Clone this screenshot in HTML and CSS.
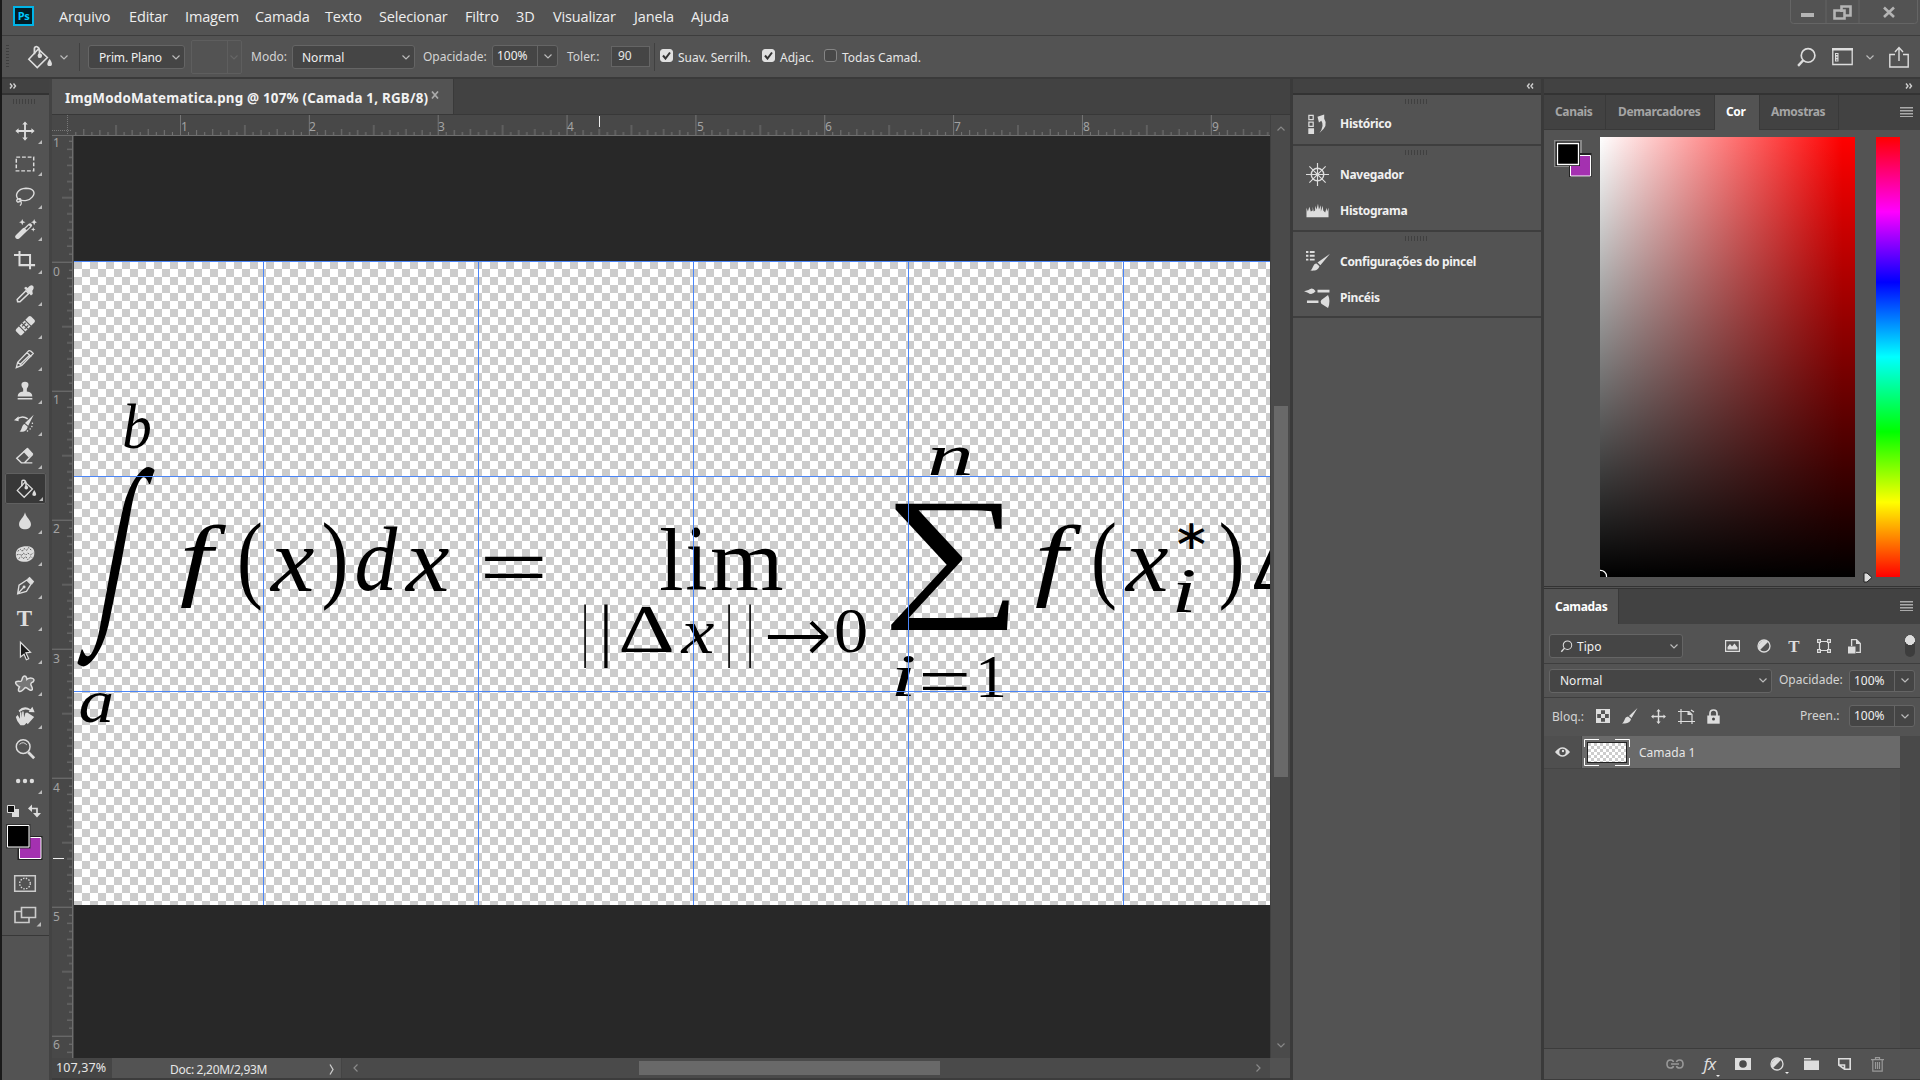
FILE: index.html
```html
<!DOCTYPE html>
<html lang="pt-BR">
<head>
<meta charset="utf-8">
<title>ImgModoMatematica.png</title>
<link rel="stylesheet" href="styles.css">
</head>
<body>
<svg width="0" height="0" class="defs" aria-hidden="true">
  <defs>
    <symbol id="chev" viewBox="0 0 8 5"><path d="M.5 .5 4 4 7.5 .5" fill="none" stroke="currentColor" stroke-width="1.2"/></symbol>
    <symbol id="bucket" viewBox="0 0 24 24"><path d="M11 4.5 2.5 13.5 10 21 19 12Z" fill="none" stroke="#ddd" stroke-width="1.4"/><path d="M12 12V6.500C12 1.500 7.500 1.500 7.500 4V9" fill="none" stroke="#ddd" stroke-width="1.600"/><circle cx="12.300" cy="10.500" r="2"/><path d="M21 13c3 4.500 2.500 6.500 0 6.500s-3-2 0-6.500"/></symbol>
    <symbol id="move" viewBox="0 0 24 24"><path d="M11 11V5H9l3-3.500L15 5h-2v6h6V9l3.500 3L19 15v-2h-6v6h2l-3 3.500L9 19h2v-6H5v2l-3.500-3L5 9v2Z"/></symbol>
    <symbol id="brush" viewBox="0 0 16 16"><path d="M15.500 0 9.500 10 7 8Z M6 8.500 9 11C8 15 4 16 0 15.500 3 14 2 9 6 8.500Z"/></symbol>
    <symbol id="lens" viewBox="0 0 20 20"><circle cx="11.500" cy="8" r="6.500" fill="none" stroke="#ddd" stroke-width="1.600"/><path d="M7 12.500 2 18" stroke="#ddd" stroke-width="2.200"/></symbol>
    <symbol id="half" viewBox="0 0 14 14"><circle cx="7" cy="7" r="6" fill="none" stroke="#ddd" stroke-width="1.300"/><path d="M11.200 2.800A6 6 0 0 1 2.800 11.200Z" transform="rotate(180 7 7)"/></symbol>
    <pattern id="ticksX" x="180" y="115" width="128.850" height="20" patternUnits="userSpaceOnUse">
      <path class="tick" d="M.5 0V20M64.900 10V20M32.700 14V20M97.100 14V20M16.600 15V20M48.800 15V20M81 15V20M113.200 15V20M8.500 17V20M24.700 17V20M40.800 17V20M56.900 17V20M73 17V20M89.100 17V20M105.200 17V20M121.300 17V20"/>
    </pattern>
    <pattern id="ticksY" x="52" y="261.700" width="20" height="129" patternUnits="userSpaceOnUse">
      <path class="tick" d="M0 .5H20M10 65H20M15 32.700H20M15 97.200H20M15 16.600H20M15 48.900H20M15 81.100H20M15 113.400H20M17 8.500H20M17 24.700H20M17 40.800H20M17 56.900H20M17 73H20M17 89.200H20M17 105.300H20M17 121.400H20"/>
    </pattern>
  </defs>
</svg>

<div class="app">
  <header class="menubar">
    <div class="logo">Ps</div>
    <nav class="menus"><span>Arquivo</span><span>Editar</span><span>Imagem</span><span>Camada</span><span>Texto</span><span>Selecionar</span><span>Filtro</span><span>3D</span><span>Visualizar</span><span>Janela</span><span>Ajuda</span></nav>
    <div class="winbtns">
      <svg width="128" height="24" viewBox="0 0 128 24"><path d="M.5 0V20.500Q.5 23.500 3.500 23.500H124.500Q127.500 23.500 127.500 20.500V0M36 0V23M69 0V23" fill="none" stroke="#656565"/><path d="M11 13h13v4H11Z" fill="#b4b4b4"/><path d="M51.500 12V6.500H60.500V15.500H55M44.500 10.500H54.500V18.500H44.500Z" fill="none" stroke="#b4b4b4" stroke-width="2.600"/><path d="M94 7.500 104 17M104 7.500 94 17" stroke="#b4b4b4" stroke-width="2.600"/></svg>
    </div>
  </header>

  <section class="options">
    <div class="grip-v"></div>
    <svg class="ic bucket" width="27" height="27"><use href="#bucket"/></svg>
    <svg class="chev" width="8" height="5"><use href="#chev"/></svg>
    <i class="sep sep-a"></i>
    <div class="select s-plane"><span>Prim. Plano</span><svg width="8" height="5"><use href="#chev"/></svg></div>
    <div class="pattern-box"><svg width="8" height="5"><use href="#chev"/></svg></div>
    <label class="l-mode">Modo:</label>
    <div class="select s-mode"><span>Normal</span><svg width="8" height="5"><use href="#chev"/></svg></div>
    <label class="l-opac">Opacidade:</label>
    <div class="combo"><span>100%</span><b><svg width="8" height="5"><use href="#chev"/></svg></b></div>
    <label class="l-tol">Toler.:</label>
    <div class="field">90</div>
    <i class="sep sep-b"></i>
    <div class="check on c1"><svg width="9" height="9" viewBox="0 0 9 9"><path d="M1 4.500 3.500 7.500 8 1.500" fill="none" stroke="#333" stroke-width="2"/></svg></div><span class="ck t1">Suav. Serrilh.</span>
    <div class="check on"><svg width="9" height="9" viewBox="0 0 9 9"><path d="M1 4.500 3.500 7.500 8 1.500" fill="none" stroke="#333" stroke-width="2"/></svg></div><span class="ck t2">Adjac.</span>
    <div class="check"></div><span class="ck">Todas Camad.</span>
    <div class="right-tools">
      <svg class="ic" width="21" height="21"><use href="#lens"/></svg>
      <svg class="ic" width="21" height="18" viewBox="0 0 21 18"><path d="M.8.800H20.200V16.500H.8Z" fill="none" stroke="#ddd" stroke-width="1.300"/><path d="M0 0H21V2.500H0ZM3 5h3.500v8.500H3Z"/><path d="M4 6.500h1.500M4 9.200h1.500M4 12h1.500" stroke="#535353"/></svg>
      <svg class="chev" width="8" height="5"><use href="#chev"/></svg>
      <svg class="ic" width="20" height="22" viewBox="0 0 20 22"><path d="M6 8.500H.8V21H19.200V8.500H14M10 15V2M6 6 10 1.500 14 6" fill="none" stroke="#ddd" stroke-width="1.400"/></svg>
    </div>
  </section>

  <main class="work">
    <aside class="toolbar">
      <div class="dock-head"><svg width="8" height="6" viewBox="0 0 8 6"><path d="M1 .5 3 3 1 5.500M4.500 .5 6.500 3 4.500 5.500" fill="none" stroke="#d0d0d0" stroke-width="1.400"/></svg></div>
      <div class="grip-row"><i class="grip"></i></div>
      <div class="tools">
        <div class="tool"><svg class="ic"><use href="#move"/></svg></div>
        <div class="tool"><svg class="ic" viewBox="0 0 24 24"><path d="M2.500 4.500H21.500V19.500H2.500Z" fill="none" stroke="#ddd" stroke-width="1.600" stroke-dasharray="4.200 2"/></svg></div>
        <div class="tool"><svg class="ic" viewBox="0 0 24 24"><path d="M5 16C0 11 4 4 13 3.500 21 3.500 24 8 20 13 17 17 11 18 5.500 16M7 15C3 14 2 18 4 18.500 7 19 8 16 7 15M7 17C9 20 8 21 6.500 22.500" fill="none" stroke="#ddd" stroke-width="1.500"/></svg></div>
        <div class="tool"><svg class="ic" viewBox="0 0 24 24"><path d="M3.500 20.500 11 13M4.500 20.500 17.500 8" stroke="#ddd" stroke-width="4.500" stroke-linecap="round"/><path d="M13 12.500 17 8.500" stroke="#535353" stroke-width="2"/><path d="M9 1 10 3.500 12.500 4.500 10 5.500 9 8 8 5.500 5.500 4.500 8 3.500ZM22 1 23 3.500 25 4.500 23 5.500 22 8 21 5.500 18.500 4.500 21 3.500ZM21 10l.7 1.800 1.800.7-1.800.700L21 15l-.7-1.800-1.800-.700 1.800-.700Z"/></svg></div>
        <div class="tool"><svg class="ic" viewBox="0 0 24 24"><path d="M0 5.500H17.500V21M6 1V16.500H23" fill="none" stroke="#ddd" stroke-width="2.200"/></svg></div>
        <div class="tool"><svg class="ic" viewBox="0 0 24 24"><path d="M4 20.500 3.500 18 13 8.500 16 11.500 6.500 20.500Z" fill="none" stroke="#ddd" stroke-width="1.700"/><path d="M11 5.500 13 4 15 5.500C19-1 24 4 20 8.500L20.500 12 18.500 13.500Z"/></svg></div>
        <div class="tool"><svg class="ic" viewBox="0 0 24 24"><g transform="rotate(-45 12 12)"><rect x="1" y="7.500" width="23" height="9" rx="2"/><path d="M7.500 7V17M16.500 7V17M9.500 10H15M9.500 14H15M12 7.500V16.500" stroke="#535353" stroke-width="1.200"/></g></svg></div>
        <div class="tool"><svg class="ic" viewBox="0 0 24 24"><path d="M2.500 21.500 4 15.500 16 3 Q18 2 21 6L8.500 19ZM14 5 19 9.500M4 15.500 8.500 19M17 8 6.500 18" fill="none" stroke="#ddd" stroke-width="1.400"/></svg></div>
        <div class="tool"><svg class="ic" viewBox="0 0 24 24"><path d="M12 2C7 2 7.500 6.500 10 9.500V12.500Q4 13 4 18H20Q20 13 14 12.500V9.500C16.500 6.500 17 2 12 2M4 19.500H20V21.300H4Z"/></svg></div>
        <div class="tool"><svg class="ic" viewBox="0 0 24 24"><path d="M21.500 2 15.500 14 12 11ZM11.500 12 15 15C14 20 10 21.500 6 20 9 19 8 13 11.500 12ZM0 8 5 3.500V9Z"/><path d="M3 7Q9 2 15 6.500" fill="none" stroke="#ddd" stroke-width="1.800"/><path d="M20 10.500Q21 16 14 20" fill="none" stroke="#ddd" stroke-width="1.400" stroke-dasharray="1.500 2"/></svg></div>
        <div class="tool"><svg class="ic" viewBox="0 0 24 24"><path d="M10 7 15 3 21 9.500 16 13.500Z"/><path d="M15 3.500 3 14.500 8 19.500H11.500L20.500 10M8 19.500H20" fill="none" stroke="#ddd" stroke-width="1.600"/></svg></div>
        <div class="tool active"><svg class="ic"><use href="#bucket"/></svg></div>
        <div class="tool"><svg class="ic" viewBox="0 0 24 24"><path d="M12 2.500C13 8 18.500 11 18.500 15.500 18.500 23 5.500 23 5.500 15.500 5.500 11 11 8 12 2.500"/></svg></div>
        <div class="tool"><svg class="ic" viewBox="0 0 24 24"><path d="M2 12C2 5 9 3 15 3.500S23 8 22 13 16 21 10 20.500 2 17 2 12"/><path d="M4 9l3-2 2 2 2-3 3 2 2-3 3 3M3 13l3-1 2 2 2-3 3 2 2-2 3 2 3-2M5 17l3-2 2 2 3-2 2 3 3-3 2 1" fill="none" stroke="#535353" stroke-width="1" stroke-dasharray="2 1.200"/></svg></div>
        <div class="tool"><svg class="ic" viewBox="0 0 24 24"><path d="M4 20.500 5.500 11 14 5.500 18.500 10 13.500 18Z M4.500 20 10.500 13.500" fill="none" stroke="#ddd" stroke-width="1.500"/><circle cx="11" cy="13" r="1.600"/><path d="M14 4.500 17 2 22 7 19.500 10.500Z"/></svg></div>
        <div class="tool"><span class="type">T</span></div>
        <div class="tool"><svg class="ic" viewBox="0 0 24 24"><path d="M7 2.500 18 13.500 13 14 16 20.500 13.500 21.500 11 15.500 7 18.500Z" fill="#1b1b1b" stroke="#ddd" stroke-width="1.300"/></svg></div>
        <div class="tool"><svg class="ic" viewBox="0 0 24 24"><path d="M10 4C12 2 14 4 14 7 18 4 24 6 21 9.500 15 12 21 15 20 18 18 21 14 15 12 16 6 23 3 20 6 15 0 11 1 9 5 9 10 10 8 6 10 4Z" fill="#777" stroke="#ddd" stroke-width="1.600"/></svg></div>
        <div class="tool"><svg class="ic" viewBox="0 0 24 24"><path d="M5 6Q11 0 18 4.500L20 2 22.500 8 16 7.500 17 6Q11 3 6 8ZM14 8 22 13 15 21 10 15ZM4 11 6.500 15V8L8 8 8.500 14 9 7H10.500L11 14 12.500 8.500 14 9 14 15 16.500 14Q13 22 11 22H7Q3 18 2 13Z"/></svg></div>
        <div class="tool plain"><svg class="ic" viewBox="0 0 24 24"><circle cx="10" cy="9.500" r="7.500" fill="none" stroke="#ddd" stroke-width="1.600"/><path d="M15.500 15.500 22 22" stroke="#ddd" stroke-width="3"/><path d="M6 7Q10 3 14 7.500" fill="none" stroke="#ddd"/></svg></div>
        <div class="tool"><svg class="ic" viewBox="0 0 24 24"><circle cx="4.500" cy="12" r="2.400"/><circle cx="12" cy="12" r="2.400"/><circle cx="19.500" cy="12" r="2.400"/></svg></div>
      </div>
      <svg class="tail" width="47" height="144" viewBox="2 796 47 144">
        <path d="M12 809h7v8h-7Z" fill="#ddd"/><path d="M7.500 805.500h7v7h-7Z" fill="#111" stroke="#ddd"/>
        <path d="M31 808.500H37V814" fill="none" stroke="#ddd" stroke-width="1.700"/><path d="M32 804.500V812L28 808.500ZM33 813H41L37 817.500Z" fill="#ddd"/>
        <path d="M19 837.500H41V858.500H19Z" fill="#a431b0" stroke="#222" stroke-width="3"/><path d="M19.500 837.500H41V858.500H19.500Z" fill="#a431b0" stroke="#fff"/>
        <path d="M7.500 825.500H29V847H7.500Z" fill="#000" stroke="#333" stroke-width="3"/><path d="M7.500 825.500H29V847H7.500Z" fill="#000" stroke="#fff"/>
        <path d="M14.700 875.700H35.300V891.300H14.700Z" fill="none" stroke="#ccc" stroke-width="1.500"/><circle cx="25" cy="883.500" r="5.300" fill="none" stroke="#ddd" stroke-width="1.300" stroke-dasharray="1.400 1.400"/>
        <path d="M21 911.500H15V922.500H29V918M21.500 907.500H35.500V917.500H21.500Z" fill="none" stroke="#ccc" stroke-width="1.600"/><path d="M41 922V926.500H36.500Z" fill="#bbb"/>
        <path d="M2 935.500H49" stroke="#383838"/>
      </svg>
    </aside>

    <section class="document">
      <div class="tabs"><div class="tab"><span>ImgModoMatematica.png @ 107% (Camada 1, RGB/8)</span><svg width="8" height="8" viewBox="0 0 8 8"><path d="M1 .5 7 7.500M7 .5 1 7.500" stroke="#aaa" stroke-width="1.700"/></svg></div></div>
      <div class="view">
        <svg class="ruler-x" width="1218" height="21" viewBox="52 115 1218 21">
          <rect x="74" y="115" width="1196" height="20" fill="url(#ticksX)"/>
          <path d="M52 135.500H1270" stroke="#6e6e6e"/><path d="M52 130.500H72M67.500 115V135" stroke="#777" stroke-dasharray="1 1"/>
          <g class="num"><text x="181" y="131">1</text><text x="309" y="131">2</text><text x="438" y="131">3</text><text x="567" y="131">4</text><text x="697" y="131">5</text><text x="825" y="131">6</text><text x="954" y="131">7</text><text x="1083" y="131">8</text><text x="1212" y="131">9</text></g>
          <path d="M599.500 116V127" stroke="#eee"/>
        </svg>
        <svg class="ruler-y" width="22" height="922" viewBox="52 136 22 922">
          <rect x="52" y="136" width="20" height="922" fill="url(#ticksY)"/>
          <path d="M72.500 136V1058" stroke="#6e6e6e"/>
          <g class="num"><text x="53" y="147">1</text><text x="53" y="276">0</text><text x="53" y="404">1</text><text x="53" y="533">2</text><text x="53" y="663">3</text><text x="53" y="792">4</text><text x="53" y="921">5</text><text x="53" y="1049">6</text></g>
          <path d="M53 858.500H64" stroke="#eee"/>
        </svg>
        <div class="canvas">
          <div class="image">
            <svg id="formula" width="1196" height="643" viewBox="74 262 1196 643"></svg>
            <svg class="guides" width="1196" height="645" viewBox="74 261 1196 645"><path d="M74 261.500H1270M74 476.500H1270M74 691.500H1270M263.500 261V905M478.500 261V905M693.500 261V905M908.500 261V905M1123.500 261V905" stroke="#4b86f8" fill="none"/></svg>
          </div>
        </div>
        <div class="vscroll"><svg width="8" height="5"><use href="#chev"/></svg><i></i><svg width="8" height="5"><use href="#chev"/></svg></div>
      </div>
      <div class="status"><div class="zoom">107,37%</div><div class="docinfo"><span>Doc: 2,20M/2,93M</span><svg width="5" height="11" viewBox="0 0 5 11"><path d="M1 .5 4 5.500 1 10.500" fill="none" stroke="#ccc" stroke-width="1.300"/></svg></div>
        <div class="hscroll"><svg width="5" height="8"><path d="M4.500 .5 1 4 4.500 7.500" fill="none" stroke="#8a8a8a" stroke-width="1.200"/></svg><i></i><svg width="5" height="8"><path d="M.5 .5 4 4 .5 7.500" fill="none" stroke="#8a8a8a" stroke-width="1.200"/></svg></div><div class="corner"></div></div>
    </section>

    <aside class="dock">
      <div class="dock-head end"><svg width="8" height="6" viewBox="0 0 8 6"><path d="M3.500 .5 1.500 3 3.500 5.500M7 .5 5 3 7 5.500" fill="none" stroke="#d0d0d0" stroke-width="1.400"/></svg></div>
      <div class="group g1"><i class="grip"></i>
        <div class="entry"><svg class="ic" viewBox="0 0 24 24"><path d="M3 3.500H7.500V8H3ZM3 10.500H7.500V15H3Z" fill="none" stroke="#ddd" stroke-width="1.300"/><path d="M2.400 17h6v6h-6ZM12 5 19 2.500V7Q24 14 14 22 19.500 14 16 9L13.500 11Z"/></svg><span>Histórico</span></div></div>
      <div class="group g2"><i class="grip"></i>
        <div class="entry"><svg class="ic" viewBox="0 0 24 24"><circle cx="12" cy="12" r="6.500" fill="none" stroke="#ddd" stroke-width="1.500"/><path d="M12 0V24M0 12H24M3.500 3.500 20.500 20.500M20.500 3.500 3.500 20.500" stroke="#ddd" stroke-width="1.200"/></svg><span>Navegador</span></div>
        <div class="entry"><svg class="ic" viewBox="0 0 24 24"><path d="M.5 19V9L2 13 3.500 8 5 13 7 12V8L8 13 9.500 12V7L11 11 12.500 5 13.500 11 15.500 6.500V13L17.500 7 18 12 20 14 21.500 9 22 13 23.500 9V19Z"/></svg><span>Histograma</span></div></div>
      <div class="group g3"><i class="grip"></i>
        <div class="entry"><svg class="ic" viewBox="0 0 24 24"><path d="M0 2h2.500M4 2H9M0 6h2.500M4 6H9M0 10h2.500M4 10H9" stroke="#ddd" stroke-width="2"/><path d="M25 4 15 16 12 13ZM11 14 14 17C13 21 9 22 4.500 21.500 8 19 7 14 11 14Z"/></svg><span>Configurações do pincel</span></div>
        <div class="entry"><svg class="ic" viewBox="0 0 24 24"><path d="M-2 5.500 2.500 4.200Q7 .5 10 5.500 6 10.500 2 7ZM12 4H24.500V6.800H12ZM1 15H13V17.800H1ZM23 9.500Q26 16 23 23L16 18.500Q14.500 16 16 14.500Z"/></svg><span>Pincéis</span></div></div>
    </aside>

    <aside class="panels">
      <div class="dock-head end"><svg width="8" height="6" viewBox="0 0 8 6"><path d="M1 .5 3 3 1 5.500M4.500 .5 6.500 3 4.500 5.500" fill="none" stroke="#d0d0d0" stroke-width="1.400"/></svg></div>
      <div class="ptabs color-tabs"><span>Canais</span><span>Demarcadores</span><span class="cur">Cor</span><span>Amostras</span><i class="burger"></i></div>
      <div class="color-body">
        <svg class="swatch" width="40" height="40" viewBox="1554 137 40 40"><path d="M1554 140H1582V167H1554Z" fill="#888"/><path d="M1569 153H1591.500V177H1569Z" fill="#222"/><path d="M1570.500 155.500H1590.500V176H1570.500Z" fill="#a431b0" stroke="#fff"/><path d="M1555.500 141.500H1580V166H1555.500Z" fill="#111"/><path d="M1557.500 143.500H1578.500V164.500H1557.500Z" fill="#000" stroke="#fff" stroke-width="1.300"/></svg>
        <div class="field-color"><svg width="8" height="8"><path d="M-.5 1.500A6 6 0 0 1 6.500 8" fill="none" stroke="#fff" stroke-width="1.200"/></svg></div>
        <div class="hue"><svg width="10" height="11" viewBox="0 0 10 11"><path d="M1 1H4L9 5.500 4 10H1Z" fill="#ddd" stroke="#222"/></svg></div>
      </div>
      <div class="ptabs layer-tabs"><span class="cur">Camadas</span><i class="burger"></i></div>
      <div class="row filter">
        <div class="select"><svg class="ic" width="13" height="13"><use href="#lens"/></svg><span>Tipo</span><svg width="8" height="5"><use href="#chev"/></svg></div>
        <div class="filters">
          <svg class="ic" width="15" height="12" viewBox="0 0 15 12"><path d="M.6.600H14.400V11.400H.6Z" fill="none" stroke="#ddd" stroke-width="1.200"/><path d="M2.500 9.500V7L5 4 7 6.500 9.500 3.500 12.500 7.500V9.500Z"/></svg>
          <svg class="ic" width="14" height="14"><use href="#half"/></svg>
          <span class="type small">T</span>
          <svg class="ic" width="14" height="14" viewBox="0 0 14 14"><path d="M2.500 2.500H11.500V11.500H2.500Z" fill="none" stroke="#ddd" stroke-width="1.200"/><path d="M.6.600H3.400V3.400H.6ZM10.600.600H13.400V3.400H10.600ZM.6 10.600H3.400V13.400H.6ZM10.600 10.600H13.400V13.400H10.600Z" fill="#535353" stroke="#ddd" stroke-width="1.200"/></svg>
          <svg class="ic" width="13" height="15" viewBox="0 0 13 15"><path d="M3.600 7V.7H8.500L12.300 4.500V13.300H8" fill="none" stroke="#ddd" stroke-width="1.300"/><path d="M8 0V5H12.500ZM0 7.500H7.500V14.500H0Z"/></svg>
        </div>
        <div class="toggle"></div>
      </div>
      <div class="row blend">
        <div class="select"><span>Normal</span><svg width="8" height="5"><use href="#chev"/></svg></div>
        <label>Opacidade:</label><div class="combo"><span>100%</span><b><svg width="8" height="5"><use href="#chev"/></svg></b></div>
      </div>
      <div class="row lock">
        <label>Bloq.:</label>
        <div class="locks">
          <svg class="ic" width="14" height="14" viewBox="0 0 14 14"><path d="M.6.600H13.400V13.400H.6Z" fill="none" stroke="#ddd" stroke-width="1.200"/><path d="M1 1h4v4H1ZM9 1h4v4H9ZM5 5h4v4H5ZM1 9h4v4H1ZM9 9h4v4H9Z"/></svg>
          <svg class="ic" width="16" height="16"><use href="#brush"/></svg>
          <svg class="ic" width="17" height="17"><use href="#move"/></svg>
          <svg class="ic" width="17" height="15" viewBox="0 0 17 15"><path d="M3 0V15M0 2.500H11L14 5.500V12.500H0M14 12.500H17M14 10V15M13 1 16 3" fill="none" stroke="#ddd" stroke-width="1.200"/><path d="M9.500 2V6H14Z"/></svg>
          <svg class="ic" width="13" height="15" viewBox="0 0 13 15"><path d="M3 7V4.500Q3 1 6.500 1T10 4.500V7" fill="none" stroke="#ddd" stroke-width="1.700"/><path d="M.3 6.500H12.700V14.700H.3Z"/><circle cx="6.500" cy="10" r="1.500" fill="#444"/></svg>
        </div>
        <label class="fill">Preen.:</label><div class="combo"><span>100%</span><b><svg width="8" height="5"><use href="#chev"/></svg></b></div>
      </div>
      <div class="list">
        <div class="layer">
          <div class="eye"><svg class="ic" width="15" height="10" viewBox="0 0 15 10"><path d="M0 5Q7.500-4.500 15 5 7.500 14.500 0 5"/><circle cx="7.500" cy="5" r="3.200" fill="#4d4d4d"/><circle cx="8" cy="4" r="1.200"/></svg></div>
          <div class="lname"><div class="thumb"><i></i><svg width="46" height="27" viewBox="0 0 46 27"><path d="M.5 8V.5H15M31 .5H45.500V8M45.500 19V26.500H31M15 26.500H.5V19" fill="none" stroke="#fff"/></svg></div><span>Camada 1</span></div>
        </div>
      </div>
      <div class="foot">
        <svg class="dim" width="18" height="10" viewBox="0 0 18 10"><path d="M7.500 3Q7 1 4.500 1 1 1 1 5T4.500 9Q7 9 7.500 7M10.500 3Q11 1 13.500 1 17 1 17 5T13.500 9Q11 9 10.500 7M5 5H13" fill="none" stroke="#999" stroke-width="1.600"/></svg>
        <span class="fx">fx</span>
        <svg class="ic" width="16" height="12" viewBox="0 0 16 12"><path d="M0 0H16V12H0Z"/><circle cx="8" cy="6" r="3.800" fill="#4a4a4a"/></svg>
        <span class="drop"><svg class="ic" width="14" height="14"><use href="#half"/></svg></span>
        <svg class="ic" width="15" height="12" viewBox="0 0 15 12"><path d="M0 0H7V1.500H0ZM0 2.500H15V12H0Z"/></svg>
        <svg class="ic" width="13" height="12" viewBox="0 0 13 12"><path d="M.8 7V.8H12.200V11.200H6.500ZM.8 7H6.500V11.200" fill="none" stroke="#ddd" stroke-width="1.600"/></svg>
        <svg class="dim" width="13" height="15" viewBox="0 0 13 15"><path d="M0 2.700H13M4.500 2.500V.7H8.500V2.500M1.800 3V14.200H11.200V3M4.500 5V12M6.500 5V12M8.500 5V12" fill="none" stroke="#999" stroke-width="1.200"/></svg>
      </div>
    </aside>
  </main>
</div>
<script src="formula.js"></script>
</body>
</html>
```
FILE: styles.css
```css
* { box-sizing: border-box; }
body { margin: 0; background: #1a1a1a; color: #e6e6e6; font: 12px "Noto Sans", "Open Sans", sans-serif; overflow: hidden; }
svg { display: block; flex: none; }
.defs { position: absolute; }
.ic { fill: #ddd; overflow: visible; }
.chev, .select svg, .combo svg { color: #bbb; }
.app { width: 1918px; height: 1080px; margin-left: 2px; display: flex; flex-direction: column; background: #535353; }

.menubar { height: 36px; display: flex; align-items: flex-start; border-bottom: 1px solid #3d3d3d; padding-left: 11px; }
.logo { width: 21px; height: 20px; margin: 6px 25px 0 0; border: 2px solid #00b4e8; background: #001c26; color: #00c8ff; font: bold 11px/15px "Open Sans", sans-serif; text-align: center; letter-spacing: -.5px; }
.menus { display: grid; grid-template-columns: 70px 56px 70px 70px 54px 86px 51px 37px 81px 57px auto; font: 14.5px/34px "Open Sans", sans-serif; white-space: nowrap; color: #eee; letter-spacing: -.15px; }
.winbtns { margin: 0 2px 0 auto; }

.options { height: 43px; display: flex; align-items: center; border-bottom: 2px solid #3a3a3a; white-space: nowrap; padding-top: 1px; }
.grip-v { width: 3px; height: 24px; margin-left: 4px; background: repeating-linear-gradient(#3e3e3e 0 1px, transparent 1px 3px); }
.bucket { margin: 0 7px 0 17px; }
.sep { width: 1px; height: 28px; background: #404040; }
.sep-a { margin: 0 8px 0 11px; }
.select { height: 24px; display: flex; align-items: center; justify-content: space-between; border: 1px solid #656565; border-radius: 3px; background: #454545; padding: 0 4px 0 10px; color: #f0f0f0; }
.s-plane { width: 97px; letter-spacing: -.15px; }
.pattern-box { width: 51px; height: 34px; margin: 0 9px 0 6px; border: 1px solid #5e5e5e; border-radius: 2px; display: flex; align-items: center; justify-content: flex-end; padding-right: 3px; color: #666; background: linear-gradient(#5e5e5e, #5e5e5e) 35px 0 / 1px 100% no-repeat; }
label { color: #d4d4d4; }
.l-mode { width: 41px; margin-top: -2px; }
.s-mode { width: 123px; margin-right: 8px; padding-left: 9px; }
.l-opac { width: 69px; margin-top: -2px; }
.combo { width: 66px; height: 22px; display: flex; border: 1px solid #656565; border-radius: 3px; background: #454545; line-height: 19px; color: #f0f0f0; }
.options .combo { margin-top: -2px; }
.combo span { flex: 1; padding-left: 4px; }
.combo b { width: 20px; border-left: 1px solid #656565; display: flex; align-items: center; justify-content: center; }
.l-tol { width: 44px; margin: -2px 0 0 9px; }
.field { width: 39px; height: 21px; margin-top: -2px; border: 1px solid #656565; background: #454545; padding-left: 6px; line-height: 18px; }
.sep-b { margin: 0 5px 0 4px; }
.check { width: 13px; height: 13px; margin: -3px 5px 0 0; border: 1px solid #858585; border-radius: 3px; background: #484848; display: flex; align-items: center; justify-content: center; }
.check.on { background: #e0e0e0; border-color: #e0e0e0; }
.ck { letter-spacing: 0; }
.t1 { width: 84px; }
.t2 { width: 44px; }
.right-tools { margin: 0 11px 0 auto; display: flex; align-items: center; gap: 15px; }
.right-tools .chev { margin-left: -2px; }

.work { height: 1001px; display: flex; }
.dock-head { height: 16px; background: #424242; border-bottom: 2px solid #333; display: flex; align-items: center; padding: 0 7px; flex: none; }
.dock-head.end { justify-content: flex-end; }
.grip { display: block; width: 23px; height: 5px; background: repeating-linear-gradient(90deg, #404040 0 1px, transparent 1px 3px); }

.toolbar { width: 50px; border-right: 3px solid #434343; display: flex; flex-direction: column; flex: none; }
.grip-row { height: 20px; padding: 4px 0 0 11px; }
.tools { height: 682px; display: grid; grid-auto-rows: 32.5px; padding-left: 2px; flex: none; }
.tool { width: 41px; height: 31px; position: relative; display: flex; align-items: center; justify-content: center; margin: auto 0; }
.tool > svg { width: 22px; height: 22px; }
.tool.active { background: #383838; outline: 1px solid #606060; outline-offset: -1px; border-radius: 2px; margin-left: 1px; }
.tool::after { content: ""; position: absolute; right: 3px; bottom: 3px; border: 2px solid transparent; border-right-color: #bbb; border-bottom-color: #bbb; }
.tool.plain::after { display: none; }
.type { font: bold 23px/24px "Liberation Serif", serif; color: #ddd; }
.type.small { font-size: 17px; line-height: 15px; }
.tail { margin-top: -1px; }

.document { width: 1238px; display: flex; flex-direction: column; flex: none; }
.tabs { height: 36px; background: #424242; border-bottom: 1px solid #383838; }
.tab { width: 402px; height: 35px; display: flex; align-items: center; gap: 3px; background: #535353; border-right: 1px solid #3a3a3a; padding: 2px 0 0 13px; font: bold 13.4px "Noto Sans", sans-serif; white-space: nowrap; letter-spacing: .2px; color: #f2f2f2; }
.tab svg { margin-top: -5px; }
.view { height: 943px; display: grid; grid-template: 21px 922px / 22px 1196px 20px; background: #484848; }
.ruler-x { grid-column: 1 / 3; }
.tick { stroke: #757575; fill: none; }
.num { fill: #a2a2a2; font: 12px "Noto Sans", sans-serif; }
.canvas { background: #282828; padding-top: 126px; }
.image { height: 643px; position: relative; background: conic-gradient(#fff 25%, #ccc 0 50%, #fff 0 75%, #ccc 0) 0 -1px / 16px 16px; }
.guides { position: absolute; left: 0; top: -1px; }
.vscroll { grid-area: 1 / 3 / 3 / 4; border-left: 1px solid #404040; background: #4a4a4a; display: flex; flex-direction: column; align-items: center; padding: 11px 0 10px; color: #888; }
.vscroll svg:first-child { transform: scaleY(-1); }
.vscroll i { width: 14px; height: 371px; background: #696969; margin: 275px 0 auto; }
.status { height: 22px; display: flex; border-bottom: 2px solid #3c3c3c; }
.zoom { width: 60px; background: #454545; padding-left: 4px; font-size: 12.5px; line-height: 19px; letter-spacing: .1px; }
.docinfo { width: 230px; display: flex; align-items: center; justify-content: space-between; padding: 2px 7px 0 58px; letter-spacing: -.3px; border-right: 1px solid #444; }
.hscroll { flex: 1; background: #4a4a4a; display: flex; align-items: center; padding: 0 9px 0 11px; }
.hscroll i { width: 301px; height: 14px; background: #696969; margin: 0 auto 0 281px; }
.corner { width: 20px; background: #525252; }

.dock { width: 254px; border: solid #3a3a3a; border-width: 0 3px 0 3px; flex: none; }
.group { border-bottom: 2px solid #3e3e3e; padding-top: 4px; }
.group .grip { margin-left: 112px; }
.g1 { height: 51px; }
.g2, .g3 { height: 86px; }
.entry { height: 35px; display: flex; align-items: center; gap: 11px; padding-left: 13px; font-weight: bold; letter-spacing: -.3px; color: #f0f0f0; }
.entry svg { width: 23px; height: 23px; }
.g1 .entry, .g2 .grip + .entry { height: 38px; }
.g2 .entry:last-child { height: 34px; }
.g3 .grip + .entry { height: 41px; }
.g3 .entry:last-child { height: 31px; }

.panels { flex: 1; display: flex; flex-direction: column; min-width: 0; }
.ptabs { height: 35px; background: #424242; display: flex; font-weight: bold; line-height: 33px; color: #a5a5a5; flex: none; }
.ptabs span { border: solid #393939; border-width: 0 1px 1px 0; padding-left: 11px; }
.ptabs .cur { background: #535353; color: #fff; border-bottom: 0; }
.color-tabs { letter-spacing: -.35px; }
.color-tabs span:nth-child(1) { width: 62px; }
.color-tabs span:nth-child(2) { width: 109px; padding-left: 12px; }
.color-tabs span:nth-child(3) { width: 45px; }
.color-tabs span:nth-child(4) { width: 79px; }
.burger { width: 13px; height: 10px; margin: 12px 7px 0 auto; background: repeating-linear-gradient(#aaa 0 1px, #777 1px 2px, transparent 2px 3px); }
.color-body { height: 459px; display: flex; padding: 7px 0 0 10px; border-bottom: 3px double #333; flex: none; }
.swatch { margin-right: 6px; }
.field-color { width: 255px; height: 440px; margin-right: 21px; background: linear-gradient(to top, #000, transparent), linear-gradient(to right, #fff, #f00 95%); display: flex; align-items: flex-end; }
.hue { width: 24px; height: 440px; background: linear-gradient(#f00, #f0f 17%, #00f 33%, #0ff 50%, #0f0 67%, #ff0 83%, #f00); position: relative; }
.hue svg { position: absolute; left: -13px; bottom: -6px; }
.layer-tabs { line-height: 35px; }
.layer-tabs .cur { width: 75px; letter-spacing: -.3px; }
.row { display: flex; align-items: center; border-bottom: 1px solid #3e3e3e; padding-left: 5px; flex: none; }
.filter { height: 40px; padding-top: 5px; }
.filter .select { width: 134px; height: 24px; gap: 4px; }
.filter .select span { margin-right: auto; }
.filters { display: flex; align-items: center; justify-content: space-between; width: 136px; margin-left: 42px; }
.toggle { width: 10px; height: 22px; border-radius: 5px; background: radial-gradient(circle at 5px 5px, #ddd 4.800px, #3d3d3d 5.200px); margin: 0 5px 0 auto; }
.blend { height: 34px; }
.blend .select { width: 223px; }
.blend label { margin: -2px 0 0 7px; width: 70px; }
.lock { height: 38px; padding: 0 0 2px 8px; border: 0; }
.lock label { width: 44px; }
.locks { display: flex; align-items: center; justify-content: space-between; width: 124px; }
.lock .fill { margin: -2px 0 0 80px; width: 49px; }
.list { flex: 1; background: linear-gradient(90deg, #4d4d4d 356px, #494949 356px); }
.layer { height: 33px; width: 356px; border-bottom: 1px solid #454545; display: flex; }
.eye { width: 38px; background: #4f4f4f; display: flex; align-items: center; padding-left: 11px; border-right: 1px solid #454545; }
.lname { flex: 1; display: flex; align-items: center; background: #6a6a6a; gap: 9px; padding-left: 2px; }
.thumb { width: 46px; height: 27px; position: relative; }
.thumb svg { position: absolute; inset: 0; }
.thumb i { position: absolute; inset: 3px; border: 1px solid #222; background: repeating-conic-gradient(#fff 0 25%, #ccc 0 50%) 0 0 / 6px 6px; }
.foot { height: 32px; display: flex; align-items: center; border-top: 1px solid #3c3c3c; border-bottom: 1px solid #3c3c3c; padding: 0 36px 0 122px; justify-content: space-between; flex: none; }
.fx { font: italic 17px/20px "Noto Sans", sans-serif; color: #ddd; position: relative; letter-spacing: -1px; }
.drop { position: relative; }
.fx::after, .drop::after { content: ""; position: absolute; right: -5px; bottom: -3px; border: 2px solid transparent; border-top-color: #eee; border-bottom: 0; }
```
FILE: formula.js
```js
// Sets each sign of the formula so that its ink fills the given box.
const ITALIC = 'italic 100px "Liberation Serif"';
const ROMAN = '100px "Liberation Serif"';
const SANS = '100px "DejaVu Sans"';
const LIGHT = '200 100px "DejaVu Sans"';

// sign, font, left, top, right, bottom, slant
const signs = [
  ['b', ITALIC, 124, 404, 150, 449],
  ['∫', ROMAN, 76, 466, 156, 667, 0.19],
  ['a', ITALIC, 80, 694, 112, 723],
  ['f', ITALIC, 181, 525, 227, 608],
  ['(', ROMAN, 240, 522, 261, 611],
  ['x', ITALIC, 269, 549, 314, 591],
  [')', ROMAN, 324, 522, 345, 611],
  ['d', ITALIC, 357, 527, 398, 591],
  ['x', ITALIC, 404, 549, 449, 591],
  ['=', ROMAN, 484, 557, 543, 578],
  ['l', ROMAN, 661, 528, 682, 590],
  ['i', ROMAN, 687, 528, 706, 590],
  ['m', ROMAN, 712, 549, 783, 590],
  ['|', ROMAN, 584, 605, 586, 668],
  ['|', ROMAN, 604, 605, 608, 668],
  ['Δ', ROMAN, 621, 607, 672, 651],
  ['x', ITALIC, 680, 624, 714, 653],
  ['|', ROMAN, 728, 605, 730, 668],
  ['|', ROMAN, 749, 605, 751, 668],
  ['→', LIGHT, 767, 620, 828, 653],
  ['0', ROMAN, 836, 610, 866, 653],
  ['∑', ROMAN, 890, 503, 1010, 631],
  ['n', ITALIC, 930, 448, 970, 476],
  ['i', ITALIC, 895, 656, 914, 697],
  ['=', ROMAN, 922, 673, 967, 690],
  ['1', ROMAN, 980, 656, 1003, 697],
  ['f', ITALIC, 1036, 525, 1082, 608],
  ['(', ROMAN, 1094, 522, 1115, 611],
  ['x', ITALIC, 1124, 549, 1168, 591],
  ['∗', SANS, 1178, 523, 1205, 549],
  ['i', ITALIC, 1176, 571, 1194, 613],
  [')', ROMAN, 1221, 522, 1241, 611],
  ['Δ', ROMAN, 1253, 527, 1318, 589],
];

const pen = document.createElement('canvas').getContext('2d');
const formula = document.getElementById('formula');

for (const [sign, font, left, top, right, bottom, slant = 0] of signs) {
  pen.font = font;
  const m = pen.measureText(sign);
  const lean = slant * (bottom - top) / 2;
  const sx = (right - left - 2 * lean) / (m.actualBoundingBoxLeft + m.actualBoundingBoxRight);
  const sy = (bottom - top) / (m.actualBoundingBoxAscent + m.actualBoundingBoxDescent);
  const y = top + m.actualBoundingBoxAscent * sy;
  const x = left + lean + m.actualBoundingBoxLeft * sx - slant * (y - (top + bottom) / 2);
  const node = document.createElementNS('http://www.w3.org/2000/svg', 'text');
  node.textContent = sign;
  node.style.font = font;
  node.setAttribute('transform', `matrix(${sx} 0 ${-slant * sy} ${sy} ${x} ${y})`);
  formula.append(node);
}
```
